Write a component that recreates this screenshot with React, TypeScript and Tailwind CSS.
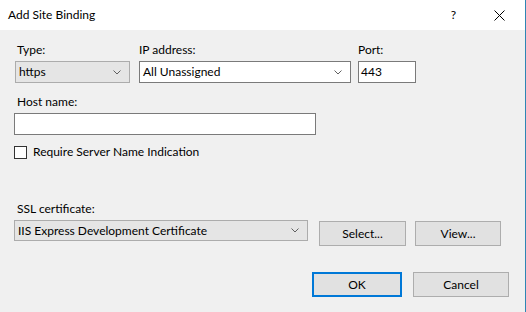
import React from 'react';

const font = { fontFamily: 'Lato, "Noto Sans", sans-serif' };

const Chevron: React.FC = () => (
  <svg width="8" height="5" viewBox="0 0 8 5" className="text-[#606060]">
    <path d="M0.5 0.5 L4 4 L7.5 0.5" fill="none" stroke="currentColor" strokeWidth="1" />
  </svg>
);

interface ComboProps {
  value: string;
  width: string;
  editable?: boolean;
}

const Combo: React.FC<ComboProps> = ({ value, width, editable }) => (
  <div
    className={`flex h-[22px] items-center justify-between border pl-[3px] pr-[8px] ${width} ${
      editable ? 'border-[#7a7a7a] bg-white' : 'border-[#acacac] bg-[#e5e5e5]'
    }`}
  >
    <span>{value}</span>
    <Chevron />
  </div>
);

const Button: React.FC<{ label: string; width: string; primary?: boolean }> = ({ label, width, primary }) => (
  <div
    className={`flex h-[25px] items-center justify-center bg-[#e1e1e1] ${width} ${
      primary ? 'border-2 border-[#0078d7]' : 'border border-[#adadad]'
    }`}
  >
    {label}
  </div>
);

export default function App() {
  return (
    <div
      className="flex h-[312px] w-[526px] flex-col border-r border-[#2e86b4] bg-[#f0f0f0] text-[12px] leading-[16px] text-black"
      style={font}
    >
      <div className="flex h-[30px] items-center bg-white pl-[8px]">
        <span className="flex-1">Add Site Binding</span>
        <span className="mr-[38px]">?</span>
        <svg width="11" height="11" viewBox="0 0 11 11" className="mr-[20px]">
          <path d="M0.5 0.5 L10.5 10.5 M10.5 0.5 L0.5 10.5" stroke="#000" strokeWidth="1" />
        </svg>
      </div>

      <div className="flex flex-col pl-[14px]">
        <div className="mt-[12px] flex">
          <div className="ml-[1px] flex w-[115px] flex-col gap-[3px]">
            <span className="pl-[2px]">Type:</span>
            <Combo value="https" width="w-[115px]" />
          </div>
          <div className="ml-[9px] flex flex-col gap-[3px]">
            <span>IP address:</span>
            <Combo value="All Unassigned" width="w-[212px]" editable />
          </div>
          <div className="ml-[7px] flex flex-col gap-[3px]">
            <span>Port:</span>
            <div className="flex h-[22px] w-[58px] items-center border border-[#7a7a7a] bg-white pl-[2px]">443</div>
          </div>
        </div>

        <span className="mt-[11px] pl-[3px]">Host name:</span>
        <div className="mt-[3px] h-[22px] w-[302px] border border-[#7a7a7a] bg-white" />

        <label className="mt-[9px] flex items-center gap-[6px]">
          <span className="h-[13px] w-[13px] border border-[#333] bg-white" />
          <span>Require Server Name Indication</span>
        </label>

        <span className="mt-[41px] pl-[3px]">SSL certificate:</span>
        <div className="mt-[3px] flex items-start">
          <div className="flex h-[21px] w-[294px] items-center justify-between border border-[#acacac] bg-[#e5e5e5] pl-[3px] pr-[8px]">
            <span>IIS Express Development Certificate</span>
            <Chevron />
          </div>
          <div className="ml-[11px] mt-[1px] flex gap-[9px]">
            <Button label="Select..." width="w-[87px]" />
            <Button label="View..." width="w-[86px]" />
          </div>
        </div>

        <div className="mt-[26px] flex justify-end gap-[11px] pr-[16px]">
          <Button label="OK" width="w-[90px]" primary />
          <Button label="Cancel" width="w-[96px]" />
        </div>
      </div>
    </div>
  );
}
